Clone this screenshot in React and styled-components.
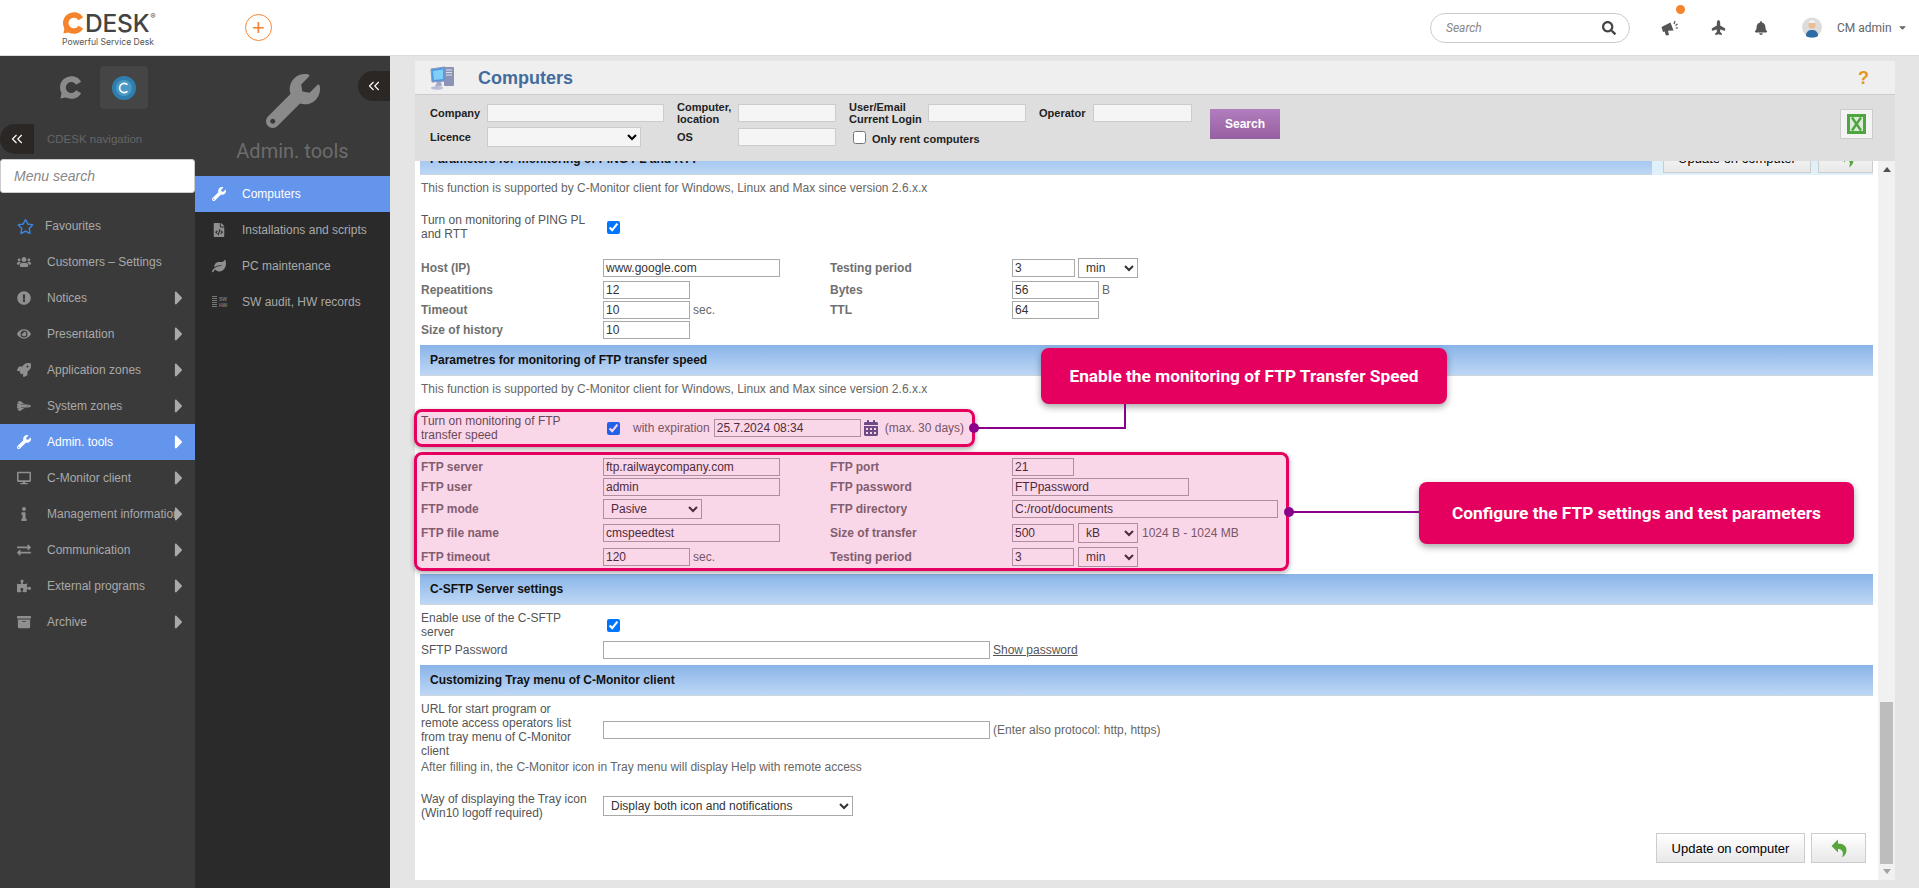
import React from 'react';
import styled, { createGlobalStyle } from 'styled-components';
import { ChevronsLeft } from 'lucide-react';
import {
  FaWrench, FaFileCode, FaLeaf, FaRegStar, FaUsers, FaExclamationCircle, FaEye, FaRocket,
  FaSpaceShuttle, FaDesktop, FaInfo, FaExchangeAlt, FaPuzzlePiece, FaArchive,
  FaPlane, FaBell, FaSearch, FaCaretDown, FaCaretRight, FaCalendarAlt,
} from 'react-icons/fa';

const Global = createGlobalStyle`
  html, body { margin: 0; height: 100%; overflow: hidden; background: #e5e5e5; }
  * { box-sizing: border-box; }
  #root { height: 100%; }
`;

const Page = styled.div`
  position: relative;
  height: 888px;
  display: flex;
  flex-direction: column;
  font-family: "Liberation Sans", Arial, sans-serif;
  font-size: 12px;
  color: #666;
`;

/* top bar */
const TopBar = styled.header`
  height: 56px;
  flex: none;
  background: #fff;
  display: flex;
  align-items: center;
  padding-left: 62px;
  border-bottom: 1px solid #dcdcdc;
`;
const Logo = styled.div`
  width: 152px;
  margin-top: 3px;
  font-family: Inter, sans-serif;
`;
const LogoMark = styled.div`
  display: flex;
  align-items: center;
  height: 24px;
`;
const LogoWord = styled.span`
  font-size: 24.5px;
  font-weight: 500;
  color: #444;
  line-height: 24px;
  margin-left: 1px;
  letter-spacing: -0.2px;
`;
const LogoReg = styled.sup`
  font-size: 8px;
  color: #555;
  align-self: flex-start;
  margin: 0 0 0 1px;
  line-height: 10px;
`;
const LogoTag = styled.div`
  font-size: 8.6px;
  color: #555;
  margin-top: 2px;
  white-space: nowrap;
`;
const PlusButton = styled.div`
  width: 27px;
  height: 27px;
  margin-left: 31px;
  border-radius: 50%;
  border: 1px solid #f5842f;
  color: #f5842f;
  display: flex;
  align-items: center;
  justify-content: center;
  font-family: "Liberation Sans", sans-serif;
  font-size: 22px;
  font-weight: 400;
  line-height: 1;
`;
const SearchPill = styled.div`
  width: 200px;
  height: 30px;
  margin-left: auto;
  border: 1px solid #ccc;
  border-radius: 15px;
  display: flex;
  align-items: center;
  justify-content: space-between;
  padding: 0 13px 0 15px;
  color: #888;
  font: italic 12px Roboto, sans-serif;
  svg { color: #444; font-size: 14px; }
`;
const TopIcons = styled.div`
  display: flex;
  align-items: center;
  color: #555;
  margin-left: 31px;
  font-size: 15px;
`;
const TopIcon = styled.div`
  position: relative;
  width: ${p => p.$w}px;
  display: flex;
  svg { display: block; }
`;
const PlaneIcon = styled(FaPlane)`
  transform: rotate(-90deg);
`;
const Badge = styled.span`
  position: absolute;
  top: -14px;
  left: 15px;
  width: 9px;
  height: 9px;
  border-radius: 50%;
  background: #f5842f;
`;
const UserName = styled.div`
  display: flex;
  align-items: center;
  gap: 5px;
  margin-left: 15px;
  width: 82px;
  font: 12px Roboto, sans-serif;
  color: #666;
  svg { font-size: 11px; }
`;

/* navigation */
const Body = styled.div`
  flex: 1;
  display: flex;
  min-height: 0;
`;
const Nav = styled.nav`
  width: 195px;
  flex: none;
  background: #3a3a3a;
`;
const NavTop = styled.div`
  display: flex;
  align-items: center;
  padding: 10px 0 0 59px;
  gap: 18px;
`;
const AppTile = styled.div`
  width: 48px;
  height: 43px;
  border-radius: 4px;
  background: #454545;
  display: flex;
  align-items: center;
  justify-content: center;
`;
const CollapseRow = styled.div`
  display: flex;
  align-items: center;
  margin-top: 15px;
  gap: 13px;
  color: #666;
  font-size: 11.5px;
`;
const CollapseTab = styled.div`
  width: ${p => p.$w}px;
  height: 30px;
  background: #2b2724;
  border-radius: 15px 0 0 15px;
  display: flex;
  align-items: center;
  justify-content: center;
  color: #fff;
`;
const MenuSearch = styled.div`
  height: 34px;
  margin-top: 5px;
  background: #fff;
  border: 1px solid #ccc;
  border-radius: 3px;
  display: flex;
  align-items: center;
  padding-left: 13px;
  font-style: italic;
  font-size: 14px;
  color: #888;
`;
const NavList = styled.div`
  margin-top: 15px;
`;
const NavItem = styled.div`
  height: 36px;
  display: flex;
  align-items: center;
  padding: 0 5px 0 17px;
  background: ${p => (p.$active ? '#6495ed' : 'transparent')};
  color: ${p => (p.$active ? '#fff' : '#a9a9a9')};
`;
const NavIcon = styled.span`
  width: ${p => p.$w || 30}px;
  flex: none;
  display: flex;
  color: ${p => (p.$active ? '#fff' : p.$color || '#8f8f8f')};
  font-size: ${p => p.$size || 14}px;
`;
const NavLabel = styled.span`
  flex: 1;
  min-width: 0;
  white-space: nowrap;
`;
const NavArrow = styled.span`
  flex: none;
  display: flex;
  font-size: 22px;
  color: ${p => (p.$active ? '#fff' : '#a9a9a9')};
`;

const SubNav = styled.div`
  width: 195px;
  flex: none;
  background: #2a2a2a;
`;
const SubHead = styled.div`
  position: relative;
  height: 120px;
  background: #3a3a3a;
  display: flex;
  flex-direction: column;
  align-items: center;
  padding-top: 18px;
  color: #8a8a8a;
`;
const SubTab = styled.div`
  position: absolute;
  top: 15px;
  right: 0;
`;
const SubTitle = styled.div`
  font: 20px Roboto, sans-serif;
  color: #6c6c6c;
  margin-top: 11px;
`;
const SwHw = styled.span`
  display: flex;
  align-items: center;
  gap: 2px;
`;
const SwBars = styled.span`
  width: 5px;
  height: 12px;
  background: repeating-linear-gradient(#777 0 1px, transparent 1px 2px);
`;
const SwText = styled.span`
  font-size: 5px;
  font-weight: bold;
  line-height: 6px;
  color: #777;
`;

/* main panel */
const Main = styled.main`
  flex: 1;
  min-width: 0;
  display: flex;
  padding: 5px 24px 8px 25px;
`;
const Panel = styled.div`
  flex: 1;
  min-width: 0;
  display: flex;
  flex-direction: column;
`;
const PanelHead = styled.div`
  height: 34px;
  flex: none;
  background: #efefef;
  border-bottom: 1px solid #ccc;
  display: flex;
  align-items: center;
  padding: 1px 26px 0 15px;
`;
const PanelTitle = styled.h1`
  margin: 0 0 0 22px;
  font-size: 18px;
  font-weight: bold;
  color: #436c9c;
`;
const HelpMark = styled.span`
  margin-left: auto;
  font-size: 18px;
  font-weight: bold;
  color: #e39a1a;
`;
const Filter = styled.div`
  height: 66px;
  flex: none;
  background: #dedede;
  display: flex;
  align-items: flex-start;
  padding: 9px 22px 0 15px;
`;
const FilterGrid = styled.div`
  display: grid;
  grid-template-columns: 57px 190px 61px 111px 79px 111px 54px 99px;
  grid-template-rows: 18px 18px;
  row-gap: 6px;
  align-items: center;
`;
const FilterLabel = styled.label`
  font-size: 11px;
  font-weight: bold;
  line-height: 12px;
  color: #222;
`;
const FilterInput = styled.input`
  width: ${p => p.$w}px;
  height: 18px;
  background: #f5f5f5;
  border: 1px solid #ccc;
  padding: 0 2px;
`;
const FilterSelect = styled.select`
  width: 154px;
  height: 20px;
  background: #f5f5f5;
  border: 1px solid #ccc;
  margin: -1px 0;
`;
const RentCheck = styled.label`
  grid-column: 5 / 8;
  display: flex;
  align-items: center;
  gap: 6px;
  padding-left: 4px;
  font-size: 11px;
  font-weight: bold;
  color: #222;
  input { margin: 0; }
  span { padding-top: 4px; }
`;
const SearchButton = styled.button`
  width: 70px;
  height: 30px;
  margin: 5px 0 0 18px;
  border: 0;
  background: linear-gradient(#b27dbe, #965f9f);
  color: #fff;
  font: bold 12px "Liberation Sans", sans-serif;
`;
const ExcelButton = styled.div`
  width: 33px;
  height: 30px;
  margin: 5px 0 0 auto;
  background: #f4f4f4;
  border: 1px solid #ccc;
  display: flex;
  align-items: center;
  justify-content: center;
`;

const Work = styled.div`
  flex: 1;
  min-height: 0;
  display: flex;
`;
const Scroller = styled.div`
  flex: 1;
  min-width: 0;
  background: #fff;
  padding: 0 5px;
  clip-path: inset(0 0 0 -6px);
`;
const Section = styled.div`
  height: 31px;
  display: flex;
  margin-top: ${p => p.$mt}px;
`;
const SectionTitle = styled.div`
  flex: 1;
  background: linear-gradient(#8ab4e8, #bdd7f5);
  border-bottom: 1px solid #cdd5dd;
  padding-left: 10px;
  display: flex;
  align-items: center;
  font-weight: bold;
  color: #111;
`;
const SectionActions = styled.div`
  width: 221px;
  flex: none;
  background: #dff0fb;
  display: flex;
  justify-content: flex-end;
  gap: 7px;
  height: 31px;
`;
const ActionButton = styled.button`
  width: ${p => p.$w}px;
  height: 30px;
  flex: none;
  margin-top: -1px;
  background: linear-gradient(#fff, #e8e8e8);
  border: 1px solid #ccc;
  color: #000;
  font: 13px "Liberation Sans", sans-serif;
  padding: 0;
  display: flex;
  align-items: center;
  justify-content: center;
`;
const Note = styled.div`
  line-height: 14px;
  padding-left: 1px;
  margin-top: ${p => p.$mt}px;
`;
const Row = styled.div`
  display: grid;
  grid-template-columns: 182px 227px 182px 1fr;
  align-items: center;
  padding-left: 1px;
  min-height: ${p => p.$h || 18}px;
  margin-top: ${p => p.$mt || 0}px;
`;
const Label = styled.div`
  font-weight: ${p => (p.$plain ? 'normal' : 'bold')};
  color: ${p => (p.$plain ? '#555' : '#707070')};
  line-height: 14px;
  white-space: nowrap;
`;
const Cell = styled.div`
  display: flex;
  align-items: center;
  gap: ${p => p.$gap ?? 3}px;
  grid-column: ${p => p.$span || 'auto'};
`;
const TextInput = styled.input`
  width: ${p => p.$w}px;
  height: 18px;
  flex: none;
  border: 1px solid #a9a9a9;
  border-radius: 0;
  padding: 0 2px;
  background: transparent;
  font: 12px "Liberation Sans", sans-serif;
  color: #333;
`;
const PickSelect = styled.select`
  width: ${p => p.$w}px;
  height: 20px;
  flex: none;
  margin: -1px 0;
  border: 1px solid #a9a9a9;
  border-radius: 0;
  background: transparent;
  font: 12px "Liberation Sans", sans-serif;
  color: #333;
  padding-left: ${p => p.$pad || 2}px;
`;
const Check = styled.input`
  margin: 0 0 0 4px;
  width: 13px;
  height: 13px;
`;
const ExpiryLabel = styled.span`
  margin: 0 4px 0 13px;
`;
const CalendarIcon = styled(FaCalendarAlt)`
  flex: none;
  margin: 0 6px 0 2px;
  color: #5a5a8c;
`;
const LinkText = styled.a`
  text-decoration: underline;
  color: #555;
`;
const Highlight = styled.div`
  position: relative;
  width: ${p => p.$w}px;
  margin: ${p => p.$mt}px 0 0 -6px;
  padding: ${p => p.$pt}px 0 2px 3px;
  border: 3px solid #e5005f;
  border-radius: 8px;
  box-shadow: 0 2px 5px rgba(0, 0, 0, 0.35);
  &::after {
    content: '';
    position: absolute;
    inset: 0;
    border-radius: 5px;
    background: rgba(223, 0, 108, 0.157);
    pointer-events: none;
  }
`;
const Footer = styled.div`
  display: flex;
  justify-content: flex-end;
  gap: 6px;
  margin: 14px 7px 0 0;
`;
const Track = styled.div`
  width: 17px;
  flex: none;
  background: #f1f1f1;
  display: flex;
  flex-direction: column;
  align-items: center;
  padding: 6px 0 6px;
`;
const TrackArrow = styled.span`
  width: 0;
  height: 0;
  border-left: 4px solid transparent;
  border-right: 4px solid transparent;
  ${p => (p.$up ? 'border-bottom: 5px solid #505050;' : 'border-top: 5px solid #a3a3a3;')}
`;
const Thumb = styled.div`
  width: 13px;
  height: 162px;
  margin: auto 0 5px;
  background: #bdbdbd;
`;

/* callouts */
const Callout = styled.div`
  position: absolute;
  left: ${p => p.$left}px;
  top: ${p => p.$top}px;
  width: ${p => p.$w}px;
  height: ${p => p.$h}px;
  background: #e5005f;
  border-radius: 8px;
  box-shadow: 0 3px 7px rgba(0, 0, 0, 0.35);
  display: flex;
  align-items: center;
  justify-content: center;
  font: 700 17.3px Roboto, sans-serif;
  color: #fff;
`;
const Connectors = styled.svg`
  position: absolute;
  inset: 0;
  pointer-events: none;
`;

function CMark({ color, size }) {
  return (
    <svg width={size} height={size} viewBox="0 0 23 24">
      <path d="M20 7.6A8.8 8.8 0 1 0 20 16.4" fill="none" stroke={color} strokeWidth="6" />
      <path d="M3 14 L1 23.5 L11 21.5 Z" fill={color} />
    </svg>
  );
}

function HornIcon() {
  return (
    <svg width="18" height="17" viewBox="0 0 18 17">
      <path d="M0.5 8 L9.5 3.5 L12.5 11.5 L7 11.8 L8 16 L5 16.5 L3.6 12.4 L2 13 Z" fill="#555" />
      <path d="M14 2 L13 5 M16.5 5 L14.5 6.5 M17 9 L14.8 8.8" stroke="#555" strokeWidth="1.2" />
    </svg>
  );
}

function ComputerIcon() {
  return (
    <svg width="26" height="24" viewBox="0 0 26 24">
      <rect x="14" y="1" width="10" height="19" rx="1" fill="#8d93b5" />
      <path d="M16 4h6M16 6.5h6M16 9h6" stroke="#dfe3f0" strokeWidth="1" />
      <path d="M1 3 L15 1 V15 L2 16 Z" fill="#4f9be6" stroke="#8d93b5" />
      <path d="M3 5 L13 3.5 V13 L4 14 Z" fill="#7fd0f7" />
      <path d="M7 16 L11 16 L12 20 L5 21 Z" fill="#a5abc7" />
      <ellipse cx="7" cy="22" rx="6" ry="1.8" fill="#b9bdd6" />
    </svg>
  );
}

function ExcelIcon() {
  return (
    <svg width="19" height="20" viewBox="0 0 19 20">
      <rect x="0" y="0" width="19" height="20" fill="#4da63f" />
      <rect x="3" y="3" width="13" height="14" fill="#dfe9dc" />
      <path d="M5 3.5 L14 16.5 M14 3.5 L5 16.5" stroke="#4da63f" strokeWidth="2.4" />
    </svg>
  );
}

function BackIcon() {
  return (
    <svg width="16" height="19" viewBox="0 0 16 19">
      <path d="M0.5 7 L7 0.5 V4.5 C13 4.5 16 8 15.5 12 C15 15 13.5 17 11 18.5 C12.5 15 12.5 10.5 7 9.8 V13.5 Z" fill="#56a63c" />
    </svg>
  );
}

function Avatar() {
  return (
    <svg width="20" height="21" viewBox="0 0 20 21">
      <circle cx="10" cy="10.5" r="10" fill="#dcdcdc" />
      <circle cx="10" cy="8" r="3.5" fill="#edbd92" />
      <path d="M4 19 C4 14 7 13 10 13 C13 13 16 14 16 19 C13 21 7 21 4 19 Z" fill="#2f6ca5" />
      <path d="M7 4.5 C8 2.8 12 2.8 13 4.5 L13 6 L7 6 Z" fill="#f1f1f1" />
    </svg>
  );
}

const navItems = [
  { label: 'Favourites', Icon: FaRegStar, size: 17, color: '#3d84dd', w: 28 },
  { label: 'Customers – Settings', Icon: FaUsers },
  { label: 'Notices', Icon: FaExclamationCircle, arrow: true },
  { label: 'Presentation', Icon: FaEye, arrow: true },
  { label: 'Application zones', Icon: FaRocket, arrow: true },
  { label: 'System zones', Icon: FaSpaceShuttle, arrow: true },
  { label: 'Admin. tools', Icon: FaWrench, arrow: true, active: true },
  { label: 'C-Monitor client', Icon: FaDesktop, arrow: true },
  { label: 'Management information', Icon: FaInfo, arrow: true },
  { label: 'Communication', Icon: FaExchangeAlt, arrow: true },
  { label: 'External programs', Icon: FaPuzzlePiece, arrow: true },
  { label: 'Archive', Icon: FaArchive, arrow: true },
];

const subItems = [
  { label: 'Computers', Icon: FaWrench, active: true },
  { label: 'Installations and scripts', Icon: FaFileCode },
  { label: 'PC maintenance', Icon: FaLeaf },
  { label: 'SW audit, HW records', swhw: true },
];

export default function App() {
  return (
    <Page>
      <Global />
      <TopBar>
        <Logo>
          <LogoMark>
            <CMark color="#f5842f" size={22} />
            <LogoWord>DESK</LogoWord>
            <LogoReg>®</LogoReg>
          </LogoMark>
          <LogoTag>Powerful Service Desk</LogoTag>
        </Logo>
        <PlusButton>+</PlusButton>
        <SearchPill>
          Search
          <FaSearch />
        </SearchPill>
        <TopIcons>
          <TopIcon $w={50}>
            <HornIcon />
            <Badge />
          </TopIcon>
          <TopIcon $w={43}><PlaneIcon size={15} /></TopIcon>
          <TopIcon $w={48}><FaBell size={14} /></TopIcon>
          <TopIcon $w={20}><Avatar /></TopIcon>
        </TopIcons>
        <UserName>
          CM admin
          <FaCaretDown />
        </UserName>
      </TopBar>

      <Body>
        <Nav>
          <NavTop>
            <CMark color="#8a8a8a" size={23} />
            <AppTile>
              <svg width="24" height="24" viewBox="0 0 24 24">
                <circle cx="12" cy="12" r="12" fill="#2f7fae" />
                <circle cx="12" cy="12" r="8" fill="#4a9ac4" />
                <path d="M15.5 8.8A4.6 4.6 0 1 0 15.5 15.2" fill="none" stroke="#fff" strokeWidth="1.6" />
              </svg>
            </AppTile>
          </NavTop>
          <CollapseRow>
            <CollapseTab $w={34}><ChevronsLeft size={18} strokeWidth={1.5} /></CollapseTab>
            CDESK navigation
          </CollapseRow>
          <MenuSearch>Menu search</MenuSearch>
          <NavList>
            {navItems.map(({ label, Icon, arrow, active, size, color, w }) => (
              <NavItem key={label} $active={active}>
                <NavIcon $active={active} $size={size} $color={color} $w={w}><Icon /></NavIcon>
                <NavLabel>{label}</NavLabel>
                {arrow && <NavArrow $active={active}><FaCaretRight /></NavArrow>}
              </NavItem>
            ))}
          </NavList>
        </Nav>

        <SubNav>
          <SubHead>
            <FaWrench size={54} />
            <SubTitle>Admin. tools</SubTitle>
            <SubTab><CollapseTab $w={32}><ChevronsLeft size={18} strokeWidth={1.5} /></CollapseTab></SubTab>
          </SubHead>
          {subItems.map(({ label, Icon, active, swhw }) => (
            <NavItem key={label} $active={active}>
              <NavIcon $active={active} $w={30}>
                {swhw ? (
                  <SwHw>
                    <SwBars />
                    <SwText>SW<br />HW</SwText>
                  </SwHw>
                ) : <Icon />}
              </NavIcon>
              <NavLabel>{label}</NavLabel>
            </NavItem>
          ))}
        </SubNav>

        <Main>
          <Panel>
            <PanelHead>
              <ComputerIcon />
              <PanelTitle>Computers</PanelTitle>
              <HelpMark>?</HelpMark>
            </PanelHead>
            <Filter>
              <FilterGrid>
                <FilterLabel>Company</FilterLabel>
                <FilterInput $w={177} />
                <FilterLabel>Computer,<br />location</FilterLabel>
                <FilterInput $w={98} />
                <FilterLabel>User/Email<br />Current Login</FilterLabel>
                <FilterInput $w={98} />
                <FilterLabel>Operator</FilterLabel>
                <FilterInput $w={99} />
                <FilterLabel>Licence</FilterLabel>
                <FilterSelect><option /></FilterSelect>
                <FilterLabel>OS</FilterLabel>
                <FilterInput $w={98} />
                <RentCheck><input type="checkbox" /><span>Only rent computers</span></RentCheck>
              </FilterGrid>
              <SearchButton>Search</SearchButton>
              <ExcelButton><ExcelIcon /></ExcelButton>
            </Filter>

            <Work>
              <Scroller>
                <Section $mt={-17}>
                  <SectionTitle>Parameters for monitoring of PING PL and RTT</SectionTitle>
                  <SectionActions>
                    <ActionButton $w={148}>Update on computer</ActionButton>
                    <ActionButton $w={55}><BackIcon /></ActionButton>
                  </SectionActions>
                </Section>
                <Note $mt={6}>This function is supported by C-Monitor client for Windows, Linux and Max since version 2.6.x.x</Note>
                <Row $mt={18}>
                  <Label $plain>Turn on monitoring of PING PL<br />and RTT</Label>
                  <Cell><Check type="checkbox" defaultChecked /></Cell>
                </Row>
                <Row $mt={18}>
                  <Label>Host (IP)</Label>
                  <Cell><TextInput $w={177} defaultValue="www.google.com" /></Cell>
                  <Label>Testing period</Label>
                  <Cell><TextInput $w={63} defaultValue="3" /><PickSelect $w={60} $pad={3}><option>min</option></PickSelect></Cell>
                </Row>
                <Row $mt={4}>
                  <Label>Repeatitions</Label>
                  <Cell><TextInput $w={87} defaultValue="12" /></Cell>
                  <Label>Bytes</Label>
                  <Cell><TextInput $w={87} defaultValue="56" />B</Cell>
                </Row>
                <Row $mt={2}>
                  <Label>Timeout</Label>
                  <Cell><TextInput $w={87} defaultValue="10" />sec.</Cell>
                  <Label>TTL</Label>
                  <Cell><TextInput $w={87} defaultValue="64" /></Cell>
                </Row>
                <Row $mt={2}>
                  <Label>Size of history</Label>
                  <Cell><TextInput $w={87} defaultValue="10" /></Cell>
                </Row>

                <Section $mt={6}>
                  <SectionTitle>Parametres for monitoring of FTP transfer speed</SectionTitle>
                </Section>
                <Note $mt={6}>This function is supported by C-Monitor client for Windows, Linux and Max since version 2.6.x.x</Note>

                <Highlight $w={561} $mt={13} $pt={2}>
                  <Row>
                    <Label $plain>Turn on monitoring of FTP<br />transfer speed</Label>
                    <Cell $span="2 / 5" $gap={0}>
                      <Check type="checkbox" defaultChecked />
                      <ExpiryLabel>with expiration</ExpiryLabel>
                      <TextInput $w={147} defaultValue="25.7.2024 08:34" />
                      <CalendarIcon size={16} />
                      (max. 30 days)
                    </Cell>
                  </Row>
                </Highlight>

                <Highlight $w={875} $mt={5} $pt={3}>
                  <Row>
                    <Label>FTP server</Label>
                    <Cell><TextInput $w={177} defaultValue="ftp.railwaycompany.com" /></Cell>
                    <Label>FTP port</Label>
                    <Cell><TextInput $w={62} defaultValue="21" /></Cell>
                  </Row>
                  <Row $mt={2}>
                    <Label>FTP user</Label>
                    <Cell><TextInput $w={177} defaultValue="admin" /></Cell>
                    <Label>FTP password</Label>
                    <Cell><TextInput $w={177} defaultValue="FTPpassword" /></Cell>
                  </Row>
                  <Row $mt={3} $h={20}>
                    <Label>FTP mode</Label>
                    <Cell><PickSelect $w={99} $pad={3}><option>Pasive</option></PickSelect></Cell>
                    <Label>FTP directory</Label>
                    <Cell><TextInput $w={266} defaultValue="C:/root/documents" /></Cell>
                  </Row>
                  <Row $mt={5}>
                    <Label>FTP file name</Label>
                    <Cell><TextInput $w={177} defaultValue="cmspeedtest" /></Cell>
                    <Label>Size of transfer</Label>
                    <Cell $gap={4}><TextInput $w={62} defaultValue="500" /><PickSelect $w={60} $pad={3}><option>kB</option></PickSelect>1024 B - 1024 MB</Cell>
                  </Row>
                  <Row $mt={6}>
                    <Label>FTP timeout</Label>
                    <Cell><TextInput $w={87} defaultValue="120" />sec.</Cell>
                    <Label>Testing period</Label>
                    <Cell $gap={4}><TextInput $w={62} defaultValue="3" /><PickSelect $w={60} $pad={3}><option>min</option></PickSelect></Cell>
                  </Row>
                </Highlight>

                <Section $mt={3}>
                  <SectionTitle>C-SFTP Server settings</SectionTitle>
                </Section>
                <Row $mt={6}>
                  <Label $plain>Enable use of the C-SFTP<br />server</Label>
                  <Cell><Check type="checkbox" defaultChecked /></Cell>
                </Row>
                <Row $mt={2}>
                  <Label $plain>SFTP Password</Label>
                  <Cell $span="2 / 5">
                    <TextInput $w={387} />
                    <LinkText>Show password</LinkText>
                  </Cell>
                </Row>

                <Section $mt={6}>
                  <SectionTitle>Customizing Tray menu of C-Monitor client</SectionTitle>
                </Section>
                <Row $mt={6}>
                  <Label $plain>URL for start program or<br />remote access operators list<br />from tray menu of C-Monitor<br />client</Label>
                  <Cell $span="2 / 5">
                    <TextInput $w={387} />
                    (Enter also protocol: http, https)
                  </Cell>
                </Row>
                <Note $mt={2}>After filling in, the C-Monitor icon in Tray menu will display Help with remote access</Note>
                <Row $mt={18}>
                  <Label $plain>Way of displaying the Tray icon<br />(Win10 logoff required)</Label>
                  <Cell $span="2 / 5">
                    <PickSelect $w={250} $pad={3}><option>Display both icon and notifications</option></PickSelect>
                  </Cell>
                </Row>
                <Footer>
                  <ActionButton $w={149}>Update on computer</ActionButton>
                  <ActionButton $w={55}><BackIcon /></ActionButton>
                </Footer>
              </Scroller>
              <Track>
                <TrackArrow $up />
                <Thumb />
                <TrackArrow />
              </Track>
            </Work>
          </Panel>
        </Main>
      </Body>

      <Callout $left={1041} $top={348} $w={406} $h={56}>Enable the monitoring of FTP Transfer Speed</Callout>
      <Callout $left={1419} $top={482} $w={435} $h={62}>Configure the FTP settings and test parameters</Callout>
      <Connectors width="1919" height="888">
        <path d="M974 428 H1125 V404" fill="none" stroke="#8b008b" strokeWidth="2" />
        <path d="M1289 512 H1419" fill="none" stroke="#8b008b" strokeWidth="2" />
        <circle cx="974" cy="428" r="5" fill="#8b008b" />
        <circle cx="1289" cy="512" r="5" fill="#8b008b" />
      </Connectors>
    </Page>
  );
}
